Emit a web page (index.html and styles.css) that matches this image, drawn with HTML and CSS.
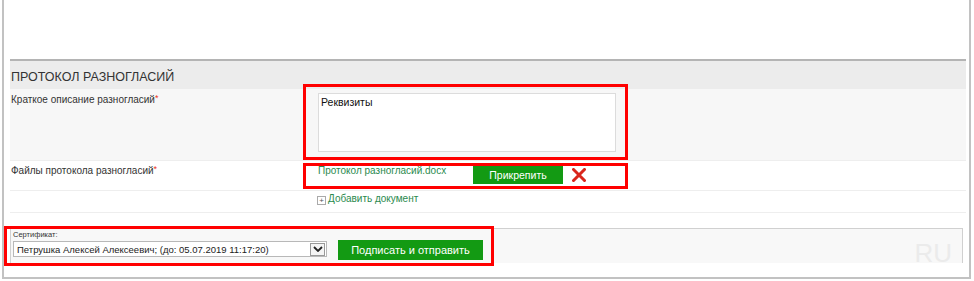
FILE: index.html
```html
<!DOCTYPE html>
<html lang="ru">
<head>
  <meta charset="UTF-8" />
  <title>Протокол разногласий</title>
  <link rel="stylesheet" href="styles.css">
</head>
<body>
  <div class="frame">
    <div class="top-space"></div>

    <div class="section">
      <div class="section-head">ПРОТОКОЛ РАЗНОГЛАСИЙ</div>

      <div class="row row-shaded">
        <div class="label">Краткое описание разногласий<span class="req">*</span></div>
        <div class="value">
          <textarea class="desc">Реквизиты</textarea>
        </div>
      </div>

      <div class="row row-files">
        <div class="label">Файлы протокола разногласий<span class="req">*</span></div>
        <div class="value files">
          <a class="file-link" href="#">Протокол разногласий.docx</a>
          <button class="btn btn-attach" type="button">Прикрепить</button>
          <span class="remove">
            <svg width="14" height="14" viewBox="0 0 14 14">
              <path d="M1.5 1.5 L12.5 12.5 M12.5 1.5 L1.5 12.5" stroke="#d9261c" stroke-width="3" stroke-linecap="square" fill="none"/>
            </svg>
          </span>
        </div>
      </div>

      <div class="row row-add">
        <div class="label"></div>
        <div class="value">
          <a class="add-doc" href="#"><span class="plus-box">+</span>Добавить документ</a>
        </div>
      </div>
    </div>

    <div class="sign">
      <div class="cert-label">Сертификат:</div>
      <div class="sign-controls">
        <div class="select">
          <span class="select-text">Петрушка Алексей Алексеевич; (до: 05.07.2019 11:17:20)</span>
          <span class="select-arrow">
            <svg width="10" height="6" viewBox="0 0 10 6">
              <path d="M1 1 L5 5 L9 1" stroke="#222" stroke-width="1.8" fill="none"/>
            </svg>
          </span>
        </div>
        <button class="btn btn-sign" type="button">Подписать и отправить</button>
      </div>
      <div class="ru">RU</div>
    </div>
  </div>

  <!-- red highlight marks over the form -->
  <div class="mark mark-desc"></div>
  <div class="mark mark-files"></div>
  <div class="mark mark-sign"></div>
</body>
</html>
```

FILE: styles.css
```css
body {
  margin: 0;
  position: relative;
  background: #fff;
  font-family: "Liberation Sans", Arial, sans-serif;
  font-size: 10px;
  color: #333;
}

.frame {
  margin-left: 2px;
  width: 956px;
  height: 277px;
  border: 2px solid #c2c2c2;
  border-top: none;
  padding: 0 3px 0 6px;
  overflow: hidden;
}

.top-space {
  height: 59px;
}

.section-head {
  border-top: 2px solid #b4b4b4;
  background: #ececec;
  height: 24px;
  line-height: 24px;
  padding: 4px 0 0 1px;
  font-size: 12.5px;
  color: #333;
}

.row {
  display: flex;
  border-bottom: 1px solid #eeeeee;
  box-sizing: border-box;
}

.row-shaded {
  background: #f7f7f7;
  height: 72px;
  padding-top: 4px;
}

.row-files {
  height: 30px;
  padding-top: 3px;
}

.row-add {
  height: 22px;
  padding-top: 1px;
}

.label {
  width: 307px;
  padding-left: 1px;
  line-height: 14px;
  flex-shrink: 0;
}

.req {
  color: #e32;
  font-size: 9px;
  vertical-align: top;
  position: relative;
  top: -2px;
}

.value {
  display: flex;
  align-items: flex-start;
}

.desc {
  width: 298px;
  height: 59px;
  margin: 0;
  padding: 2px 2px;
  border: 1px solid #dcdcdc;
  box-sizing: border-box;
  font-family: "Liberation Sans", Arial, sans-serif;
  font-size: 10.5px;
  color: #111;
  resize: none;
  background: #fff;
}

.file-link {
  width: 155px;
  line-height: 14px;
  color: #2b8a4e;
  text-decoration: none;
}

.btn {
  border: none;
  background: #139a13;
  color: #fff;
  font-family: "Liberation Sans", Arial, sans-serif;
  padding: 0;
  cursor: pointer;
}

.btn-attach {
  width: 90px;
  height: 18px;
  margin-top: 2px;
  font-size: 10.5px;
}

.remove {
  margin: 4px 0 0 9px;
  line-height: 0;
}

.add-doc {
  display: flex;
  align-items: center;
  line-height: 14px;
  color: #2b8a4e;
  text-decoration: none;
  margin-left: -1px;
}

.plus-box {
  width: 7px;
  height: 7px;
  border: 1px solid #aaa;
  font-size: 8px;
  line-height: 7px;
  text-align: center;
  color: #555;
  margin: 2px 2px 0 0;
}

.sign {
  position: relative;
  margin: 15px 3px 0 0;
  height: 35px;
  border: 1px solid #d0d0d0;
  border-bottom: none;
  background: #f8f8f8;
  padding: 1px 0 0 2px;
  box-sizing: border-box;
}

.cert-label {
  font-size: 7.5px;
  line-height: 10px;
  color: #333;
}

.sign-controls {
  display: flex;
  align-items: flex-start;
}

.select {
  width: 314px;
  height: 16px;
  margin-top: 1px;
  border: 1px solid #b8b8b8;
  background: #fff;
  box-sizing: border-box;
  display: flex;
  align-items: center;
  justify-content: space-between;
  padding: 0 1px 0 3px;
}

.select-text {
  font-size: 9.5px;
  color: #222;
}

.select-arrow {
  width: 13px;
  height: 11px;
  border: 1px solid #999;
  display: flex;
  align-items: center;
  justify-content: center;
  background: #f4f4f4;
}

.btn-sign {
  width: 145px;
  height: 20px;
  margin-left: 11px;
  font-size: 11px;
}

.ru {
  position: absolute;
  right: 10px;
  top: 9px;
  font-size: 26px;
  line-height: 30px;
  color: #ebebeb;
}

.mark {
  position: absolute;
  border: 3px solid #ff0000;
  box-sizing: border-box;
  pointer-events: none;
}

.mark-desc {
  left: 303px;
  top: 84px;
  width: 325px;
  height: 76px;
}

.mark-files {
  left: 303px;
  top: 163px;
  width: 325px;
  height: 26px;
}

.mark-sign {
  left: 4px;
  top: 226px;
  width: 490px;
  height: 40px;
}
```
